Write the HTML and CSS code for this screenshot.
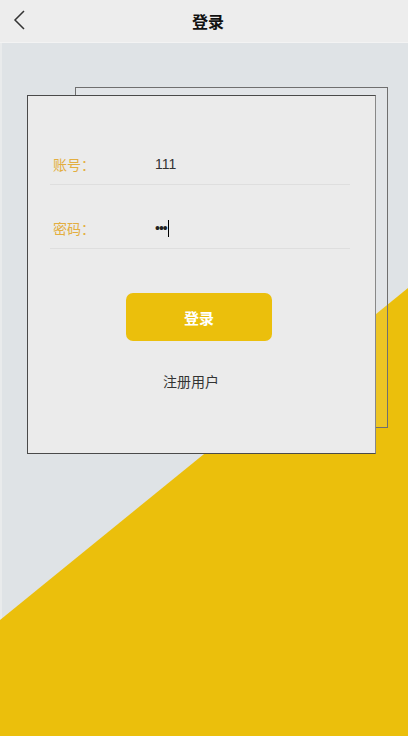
FILE: index.html
```html
<!DOCTYPE html>
<html lang="zh-CN">
<head>
    <meta charset="UTF-8">
    <meta name="viewport" content="width=device-width, initial-scale=1.0">
    <title>登录</title>
    <link rel="stylesheet" href="styles.css">
</head>
<body>

    <div class="header">
        <a class="back" href="#">
            <svg width="14" height="22" viewBox="0 0 14 22">
                <path d="M11 2 L2 11 L11 20" fill="none" stroke="#333" stroke-width="1.5"/>
            </svg>
        </a>
        <h1>登录</h1>
    </div>

    <div class="main">
        <div class="card-wrap">
            <div class="card-back"></div>
            <div class="card">
                <div class="form">
                    <div class="row">
                        <label>账号：</label>
                        <input type="text" value="111">
                    </div>
                    <div class="row">
                        <label>密码：</label>
                        <span class="pwd">&bull;&bull;&bull;</span><span class="caret"></span>
                    </div>
                    <button class="login-btn">登录</button>
                    <a class="register" href="#">注册用户</a>
                </div>
            </div>
        </div>
    </div>

</body>
</html>
```

FILE: styles.css
```css
body {
    margin: 0;
    height: 736px;
    overflow: hidden;
    font-family: 'Liberation Sans', 'Noto Sans CJK SC', sans-serif;
    background-color: #dfe3e6;
}

.header {
    height: 42px;
    background-color: #ededed;
    border-bottom: 1px solid #f3f3f3;
    display: flex;
    align-items: center;
    justify-content: center;
    padding-left: 8px;
    position: relative;
}

.header h1 {
    margin: 0;
    font-size: 16px;
    font-weight: bold;
    color: #111;
    font-family: 'Noto Sans CJK SC', sans-serif;
}

.back {
    position: absolute;
    left: 13px;
    top: 9px;
    display: flex;
}

.main {
    position: relative;
    height: 693px;
    padding-top: 52px;
    box-sizing: border-box;
    border-left: 2px solid #e9ebec;
}

/* yellow diagonal in the background */
.main::before {
    content: '';
    position: absolute;
    left: -2px;
    right: 0;
    top: 0;
    bottom: 0;
    background-color: #ebbf0c;
    clip-path: polygon(0 577px, 100% 245px, 100% 100%, 0 100%);
}

.card-wrap {
    position: relative;
    margin-left: 25px;
    width: 349px;
}

.card-back {
    position: absolute;
    left: 48px;
    top: -8px;
    width: 311px;
    height: 339px;
    border: 1.5px solid #6f6f6f;
    background-color: rgba(255, 255, 255, 0.1);
}

.card {
    position: relative;
    height: 357px;
    background-color: #ebebeb;
    border: 1px solid #4a4a4a;
    border-right-color: #888;
}

.form {
    width: 300px;
    margin-left: 22px;
    padding-top: 48px;
}

.row {
    height: 40px;
    display: flex;
    align-items: center;
    padding-left: 3px;
    border-bottom: 1px solid #dedede;
    margin-bottom: 23px;
}

.row label {
    width: 102px;
    font-size: 14px;
    color: #e3ae40;
    font-family: 'Noto Sans CJK SC', sans-serif;
}

.row input {
    border: none;
    outline: none;
    background: transparent;
    padding: 0;
    font-size: 14px;
    color: #333;
    font-family: 'Liberation Sans', sans-serif;
}

.pwd {
    font-size: 14px;
    letter-spacing: -1px;
    color: #222;
}

.caret {
    display: inline-block;
    width: 1px;
    height: 17px;
    margin-left: 1px;
    background-color: #000;
}

.login-btn {
    display: block;
    width: 146px;
    height: 48px;
    margin: 44px 0 0 76px;
    border: none;
    border-radius: 7px;
    background-color: #ebbf0c;
    color: #fff;
    font-size: 15px;
    font-weight: bold;
    font-family: 'Noto Sans CJK SC', sans-serif;
    cursor: pointer;
}

.register {
    display: block;
    margin: 30px 0 0 113px;
    font-size: 14px;
    line-height: 20px;
    color: #333;
    text-decoration: none;
    font-family: 'Noto Sans CJK SC', sans-serif;
}
```
